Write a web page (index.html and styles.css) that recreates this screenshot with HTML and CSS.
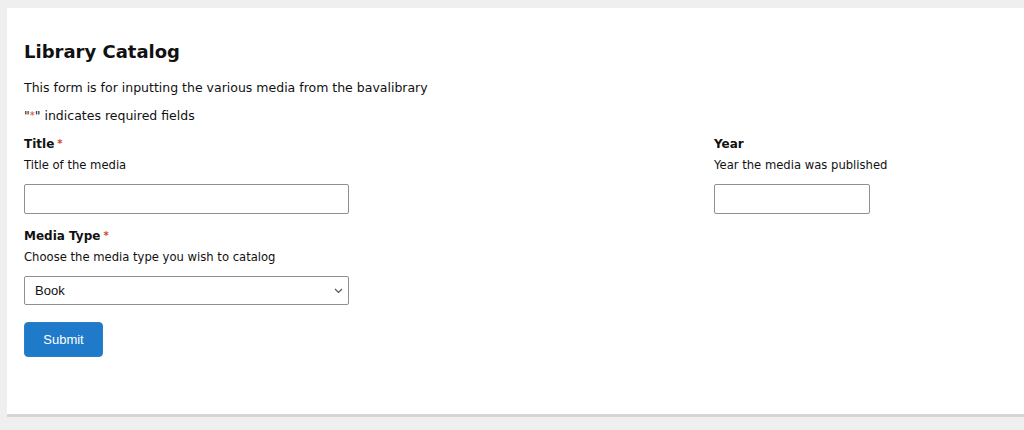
FILE: index.html
```html
<!DOCTYPE html>
<html lang="en">
<head>
<meta charset="utf-8">
<title>Library Catalog</title>
<link rel="stylesheet" href="styles.css">
</head>
<body>
<main class="card">
  <h2 class="form-title">Library Catalog</h2>
  <p class="form-desc">This form is for inputting the various media from the bavalibrary</p>
  <p class="req-note">"<span class="req">*</span>" indicates required fields</p>
  <form class="form-grid">
    <div class="field">
      <label class="label">Title<span class="req">*</span></label>
      <div class="help">Title of the media</div>
      <input class="input input-title" type="text">
    </div>
    <div class="field field-year">
      <label class="label">Year</label>
      <div class="help">Year the media was published</div>
      <input class="input input-year" type="text">
    </div>
    <div class="field field-full">
      <label class="label">Media Type<span class="req">*</span></label>
      <div class="help">Choose the media type you wish to catalog</div>
      <div class="select">
        <span>Book</span>
        <svg class="chev" width="9" height="6" viewBox="0 0 9 6"><path d="M1 1l3.5 3.5L8 1" fill="none" stroke="#555" stroke-width="1.2"/></svg>
      </div>
    </div>
    <div class="field-full">
      <button class="submit" type="button">Submit</button>
    </div>
  </form>
</main>
</body>
</html>
```

FILE: styles.css
```css
html, body {
  margin: 0;
  padding: 0;
  background: #efefef;
  height: 100%;
  overflow: hidden;
}
body {
  padding: 8px 0 0 7px;
  font-family: "DejaVu Sans", Verdana, sans-serif;
  color: #111;
}
.card {
  background: #fff;
  height: 409px;
  border-bottom: 3px solid #d6d6d6;
  padding: 0 0 0 17px;
  box-sizing: border-box;
}
.form-title {
  margin: 0;
  padding-top: 32px;
  font-size: 18px;
  line-height: 24px;
  font-weight: bold;
}
.form-desc {
  margin: 16px 0 0;
  font-size: 12.5px;
  line-height: 16px;
}
.req-note {
  margin: 12px 0 0;
  font-size: 12.5px;
  line-height: 16px;
}
.req {
  color: #d0452c;
  font-size: 10px;
  margin-left: 3px;
  vertical-align: 1px;
}
.req-note .req { margin: 0; }
.form-grid {
  display: grid;
  grid-template-columns: 690px 1fr;
  margin-top: 12px;
}
.field-full { grid-column: 1 / -1; }
.label {
  display: block;
  font-size: 12px;
  font-weight: bold;
  line-height: 16px;
}
.help {
  font-size: 11.6px;
  line-height: 16px;
  margin-top: 5px;
}
.input {
  display: block;
  box-sizing: border-box;
  height: 30px;
  margin-top: 11px;
  border: 1px solid #8f8f8f;
  border-radius: 2px;
  background: #fff;
}
.input-title { width: 325px; }
.input-year { width: 156px; }
.field-full.field { margin-top: 14px; }
.select {
  box-sizing: border-box;
  width: 325px;
  height: 29px;
  margin-top: 11px;
  border: 1px solid #8f8f8f;
  border-radius: 2px;
  display: flex;
  align-items: center;
  justify-content: space-between;
  padding: 0 5px 0 10px;
  font-family: "Liberation Sans", Arial, sans-serif;
  font-size: 13px;
  color: #111;
}
.submit {
  margin-top: 17px;
  width: 79px;
  height: 35px;
  background: #1f7bc9;
  color: #fff;
  border: 1px solid #2a7fc6;
  border-radius: 4px;
  font-family: "Liberation Sans", Arial, sans-serif;
  font-size: 13px;
  padding: 0;
}
```
